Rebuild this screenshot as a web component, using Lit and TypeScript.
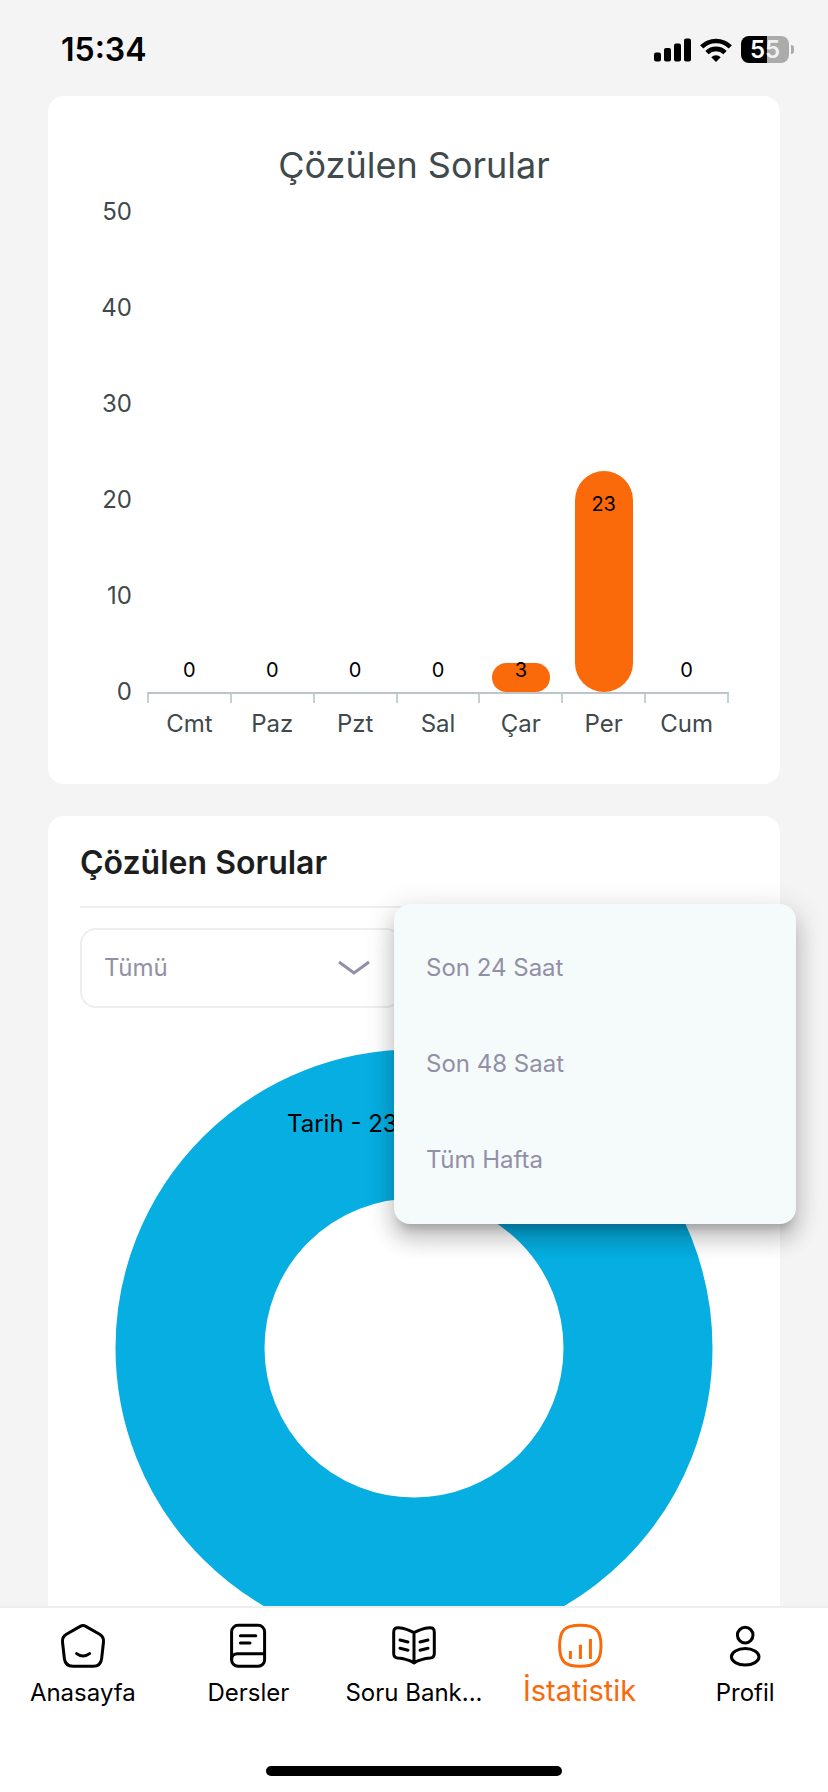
import { LitElement, html, css, svg } from "lit";
import { customElement, property } from "lit/decorators.js";
import { classMap } from "lit/directives/class-map.js";
import { styleMap } from "lit/directives/style-map.js";

interface Day {
  name: string;
  solved: number;
}

const AXIS_MAX = 50;
const AXIS_STEPS = [50, 40, 30, 20, 10, 0];

const WEEK: Day[] = [
  { name: "Cmt", solved: 0 },
  { name: "Paz", solved: 0 },
  { name: "Pzt", solved: 0 },
  { name: "Sal", solved: 0 },
  { name: "Çar", solved: 3 },
  { name: "Per", solved: 23 },
  { name: "Cum", solved: 0 },
];

const RANGES = ["Son 24 Saat", "Son 48 Saat", "Tüm Hafta"];

const ICONS = {
  home: svg`
    <path d="M26.8 4.4 40.6 12.3Q45 15 44.5 20L42.6 36.8Q41.6 44.2 34.2 44.2H13.8Q6.4 44.2 5.4 36.8L3.5 20Q3 15 7.4 12.3L21.2 4.4Q24 2.8 26.8 4.4Z"/>
    <path d="M17.6 31.6Q24 36.4 30.6 31.6"/>`,
  book: svg`
    <rect x="7.6" y="3.3" width="33" height="41" rx="6.5"/>
    <path d="M40.6 31.8H13.6Q7.6 31.8 7.6 37.5M16.4 13.8H31.8M16.4 21H26"/>`,
  bank: svg`
    <path d="M24 10.6C19.5 8 14.5 6.2 8.6 5.7Q3.7 5.4 3.7 10.2V31.4Q3.7 35.6 8 36.1C14 36.6 18.5 37.8 24 40.9C29.5 37.8 34 36.6 40 36.1Q44.3 35.6 44.3 31.4V10.2Q44.3 5.4 39.4 5.7C33.5 6.2 28.5 8 24 10.6ZM24 10.6V40.8"/>
    <path d="M10 18 18 20M10 26.2 18 28.2M38 18 30 20M38 26.2 30 28.2"/>`,
  stats: svg`
    <path d="M24.3 3.3C40 3.3 45 8.3 45 23.8S40 44.3 24.3 44.3 3.6 39.3 3.6 23.8 8.6 3.3 24.3 3.3Z"/>
    <path class="columns" d="M14.4 29V37M24.4 22.7V37M34.4 17V37"/>`,
  profile: svg`
    <circle cx="24.2" cy="13.1" r="7.8"/>
    <ellipse cx="24.2" cy="34.8" rx="13.8" ry="8.2"/>`,
};

const TABS = [
  { icon: ICONS.home, text: "Anasayfa" },
  { icon: ICONS.book, text: "Dersler" },
  { icon: ICONS.bank, text: "Soru Bank..." },
  { icon: ICONS.stats, text: "İstatistik", active: true },
  { icon: ICONS.profile, text: "Profil" },
];

@customElement("status-bar")
export class StatusBar extends LitElement {
  static styles = css`
    :host {
      display: flex;
      align-items: center;
      justify-content: space-between;
      height: 96px;
      padding: 3px 34px 0 61px;
      box-sizing: border-box;
      flex: none;
    }
    .time {
      font-size: 32px;
      font-weight: 600;
      line-height: 40px;
    }
    .signals {
      display: flex;
      align-items: center;
      gap: 9px;
    }
    .battery {
      display: flex;
      align-items: center;
      gap: 2px;
    }
    .cell {
      width: 48px;
      height: 27px;
      border-radius: 8px;
      background: linear-gradient(90deg, #000 54%, #ababab 54%);
      color: #fff;
      font-size: 24px;
      font-weight: 600;
      line-height: 27px;
      text-align: center;
    }
    .rest {
      color: #f0f0f0;
    }
    .nub {
      width: 3px;
      height: 9px;
      border-radius: 0 4px 4px 0;
      background: #ababab;
    }
  `;

  render() {
    return html`
      <span class="time">15:34</span>
      <span class="signals">
        <svg width="37" height="24" viewBox="0 0 37 24" aria-hidden="true">
          <rect x="0" y="14.5" width="7" height="9" rx="2" />
          <rect x="10" y="10" width="7" height="13.5" rx="2" />
          <rect x="20" y="5.5" width="7" height="18" rx="2" />
          <rect x="30" y="0.5" width="7" height="23" rx="2" />
        </svg>
        <svg width="32" height="24" viewBox="0 0 32 24" aria-hidden="true">
          <g fill="none" stroke="#000" stroke-width="4.6">
            <path d="M1.7 8.9A20.3 20.3 0 0 1 30.3 8.9" />
            <path d="M7 14.7A12.6 12.6 0 0 1 25 14.7" />
          </g>
          <path d="M16 24 11.3 19.3A6.6 6.6 0 0 1 20.7 19.3Z" />
        </svg>
        <span class="battery">
          <span class="cell">5<span class="rest">5</span></span>
          <span class="nub"></span>
        </span>
      </span>
    `;
  }
}

@customElement("week-chart")
export class WeekChart extends LitElement {
  @property({ attribute: false }) days: Day[] = [];

  static styles = css`
    :host {
      display: block;
      color: #40494c;
    }
    .title {
      margin: 0;
      font-size: 36px;
      font-weight: 400;
      line-height: 44px;
      text-align: center;
    }
    .chart {
      display: grid;
      grid-template-columns: 52px 1fr;
      grid-template-rows: 480px auto;
      column-gap: 16px;
      padding: 25px 52px 0 32px;
      font-size: 24px;
      line-height: 32px;
    }
    .scale {
      display: flex;
      flex-direction: column;
      justify-content: space-between;
      margin: -16px 0;
      text-align: right;
    }
    .plot,
    .names {
      display: grid;
      grid-template-columns: repeat(7, 1fr);
    }
    .plot {
      grid-template-rows: 100%;
    }
    .day {
      display: grid;
      grid-template-rows: 100%;
      justify-items: center;
      align-items: end;
    }
    .bar,
    .value {
      grid-area: 1 / 1;
    }
    .bar {
      width: 70%;
      border-radius: 29px;
      background: #fa690a;
    }
    .value {
      color: #000;
      font-size: 20px;
      line-height: 24px;
    }
    .axis {
      grid-column: 2;
    }
    .ticks {
      display: flex;
      justify-content: space-between;
      margin: 0 -1px;
      border-top: 2px solid #bcc6c9;
    }
    .tick {
      width: 2px;
      height: 9px;
      background: #c6cfd1;
    }
    .names {
      padding-top: 5px;
      text-align: center;
    }
  `;

  private column(day: Day) {
    const share = `${(day.solved / AXIS_MAX) * 100}%`;
    return html`
      <div class="day">
        <div class="bar" style=${styleMap({ height: share })}></div>
        <div class="value" style=${styleMap({ height: `max(34px, calc(${share} - 21px))` })}>
          ${day.solved}
        </div>
      </div>
    `;
  }

  render() {
    return html`
      <h2 class="title">Çözülen Sorular</h2>
      <div class="chart">
        <div class="scale">${AXIS_STEPS.map((n) => html`<span>${n}</span>`)}</div>
        <div class="plot">${this.days.map((d) => this.column(d))}</div>
        <div class="axis">
          <div class="ticks">
            ${[...this.days, null].map(() => html`<span class="tick"></span>`)}
          </div>
          <div class="names">${this.days.map((d) => html`<span>${d.name}</span>`)}</div>
        </div>
      </div>
    `;
  }
}

@customElement("subject-chart")
export class SubjectChart extends LitElement {
  static styles = css`
    :host {
      display: block;
    }
    .title {
      margin: 0;
      padding-bottom: 25px;
      border-bottom: 2px solid #eee;
      color: #1c1e1e;
      font-size: 32px;
      font-weight: 600;
      line-height: 36px;
    }
    .filters {
      display: grid;
      grid-template-columns: 1fr 1fr;
      gap: 24px;
      margin-top: 20px;
    }
    .field {
      display: grid;
      align-items: center;
    }
    .select,
    .arrow {
      grid-area: 1 / 1;
    }
    .select {
      width: 100%;
      height: 80px;
      padding: 0 64px 1px 22px;
      border: 2px solid #eee;
      border-radius: 16px;
      background: none;
      appearance: none;
      color: #928fa6;
      font: inherit;
      font-size: 24px;
    }
    .arrow {
      justify-self: end;
      margin-right: 31px;
      pointer-events: none;
    }
    .range {
      position: relative;
    }
    .menu {
      position: absolute;
      top: -24px;
      left: -32px;
      right: -48px;
      padding: 15px 0 17px;
      border-radius: 16px;
      background: #f5fbfb;
      box-shadow:
        0 10px 10px -6px rgba(0, 0, 0, 0.2),
        0 16px 20px 2px rgba(0, 0, 0, 0.14),
        0 6px 28px 4px rgba(0, 0, 0, 0.12);
    }
    .option {
      display: block;
      width: 100%;
      height: 96px;
      padding: 0 32px;
      border: 0;
      background: none;
      color: #928fa6;
      font: inherit;
      font-size: 24px;
      text-align: left;
    }
    .donut {
      display: block;
      width: 100%;
      margin-top: 6px;
    }
    .donut text {
      font-size: 24px;
    }
  `;

  render() {
    return html`
      <h2 class="title">Çözülen Sorular</h2>
      <div class="filters">
        <div class="field">
          <select class="select" aria-label="Tümü">
            <option>Tümü</option>
          </select>
          <svg class="arrow" width="34" height="16" viewBox="0 0 34 16" aria-hidden="true">
            <path d="M2 2 17 13 32 2" fill="none" stroke="#928fa6" stroke-width="3" />
          </svg>
        </div>
        <div class="range">
          <div class="menu" role="listbox" aria-label="Tüm Hafta">
            ${RANGES.map(
              (r) => html`<button class="option" type="button" role="option">${r}</button>`,
            )}
          </div>
        </div>
      </div>
      <svg class="donut" viewBox="0 0 668 668">
        <circle cx="334" cy="334" r="224" fill="none" stroke="#06aee1" stroke-width="149" />
        <text x="207" y="118">Tarih - 23</text>
      </svg>
    `;
  }
}

@customElement("tab-bar")
export class TabBar extends LitElement {
  static styles = css`
    :host {
      display: block;
      flex: none;
      padding-bottom: 16px;
      border-top: 2px solid #eee;
      background: #fff;
    }
    .tabs {
      display: grid;
      grid-template-columns: repeat(5, 1fr);
      padding-top: 14px;
    }
    .tab {
      display: flex;
      flex-direction: column;
      align-items: center;
      gap: 3px;
      color: #000;
      font-size: 24px;
      line-height: 40px;
      text-decoration: none;
      white-space: nowrap;
    }
    .active {
      color: #fa690a;
      font-size: 29px;
      line-height: 36px;
    }
    .icon {
      width: 48px;
      height: 48px;
      fill: none;
      stroke: currentColor;
      stroke-width: 3px;
      stroke-linecap: round;
      stroke-linejoin: round;
    }
    .columns {
      stroke-width: 3px;
      stroke-linecap: butt;
    }
    .home-line {
      width: 296px;
      height: 10px;
      margin: 53px auto 0;
      border-radius: 5px;
      background: #000;
    }
  `;

  render() {
    return html`
      <nav class="tabs">
        ${TABS.map(
          (t) => html`
            <a class=${classMap({ tab: true, active: !!t.active })} href="#">
              <svg class="icon" viewBox="0 0 48 48" aria-hidden="true">${t.icon}</svg>
              <span>${t.text}</span>
            </a>
          `,
        )}
      </nav>
      <div class="home-line"></div>
    `;
  }
}

@customElement("app-root")
export class AppRoot extends LitElement {
  static styles = css`
    :host {
      display: flex;
      flex-direction: column;
      height: 100vh;
      background: #f4f4f4;
      color: #000;
      font-family: Inter, "Liberation Sans", sans-serif;
    }
    .content {
      display: flex;
      flex: 1;
      flex-direction: column;
      gap: 32px;
      min-height: 0;
      padding: 0 48px;
      overflow-y: auto;
      scrollbar-width: none;
    }
    .card {
      flex: none;
      border-radius: 16px;
      background: #fff;
    }
    .week {
      padding: 47px 0 44px;
    }
    .subjects {
      padding: 29px 32px;
    }
  `;

  render() {
    return html`
      <status-bar></status-bar>
      <main class="content">
        <section class="card week"><week-chart .days=${WEEK}></week-chart></section>
        <section class="card subjects"><subject-chart></subject-chart></section>
      </main>
      <tab-bar></tab-bar>
    `;
  }
}
